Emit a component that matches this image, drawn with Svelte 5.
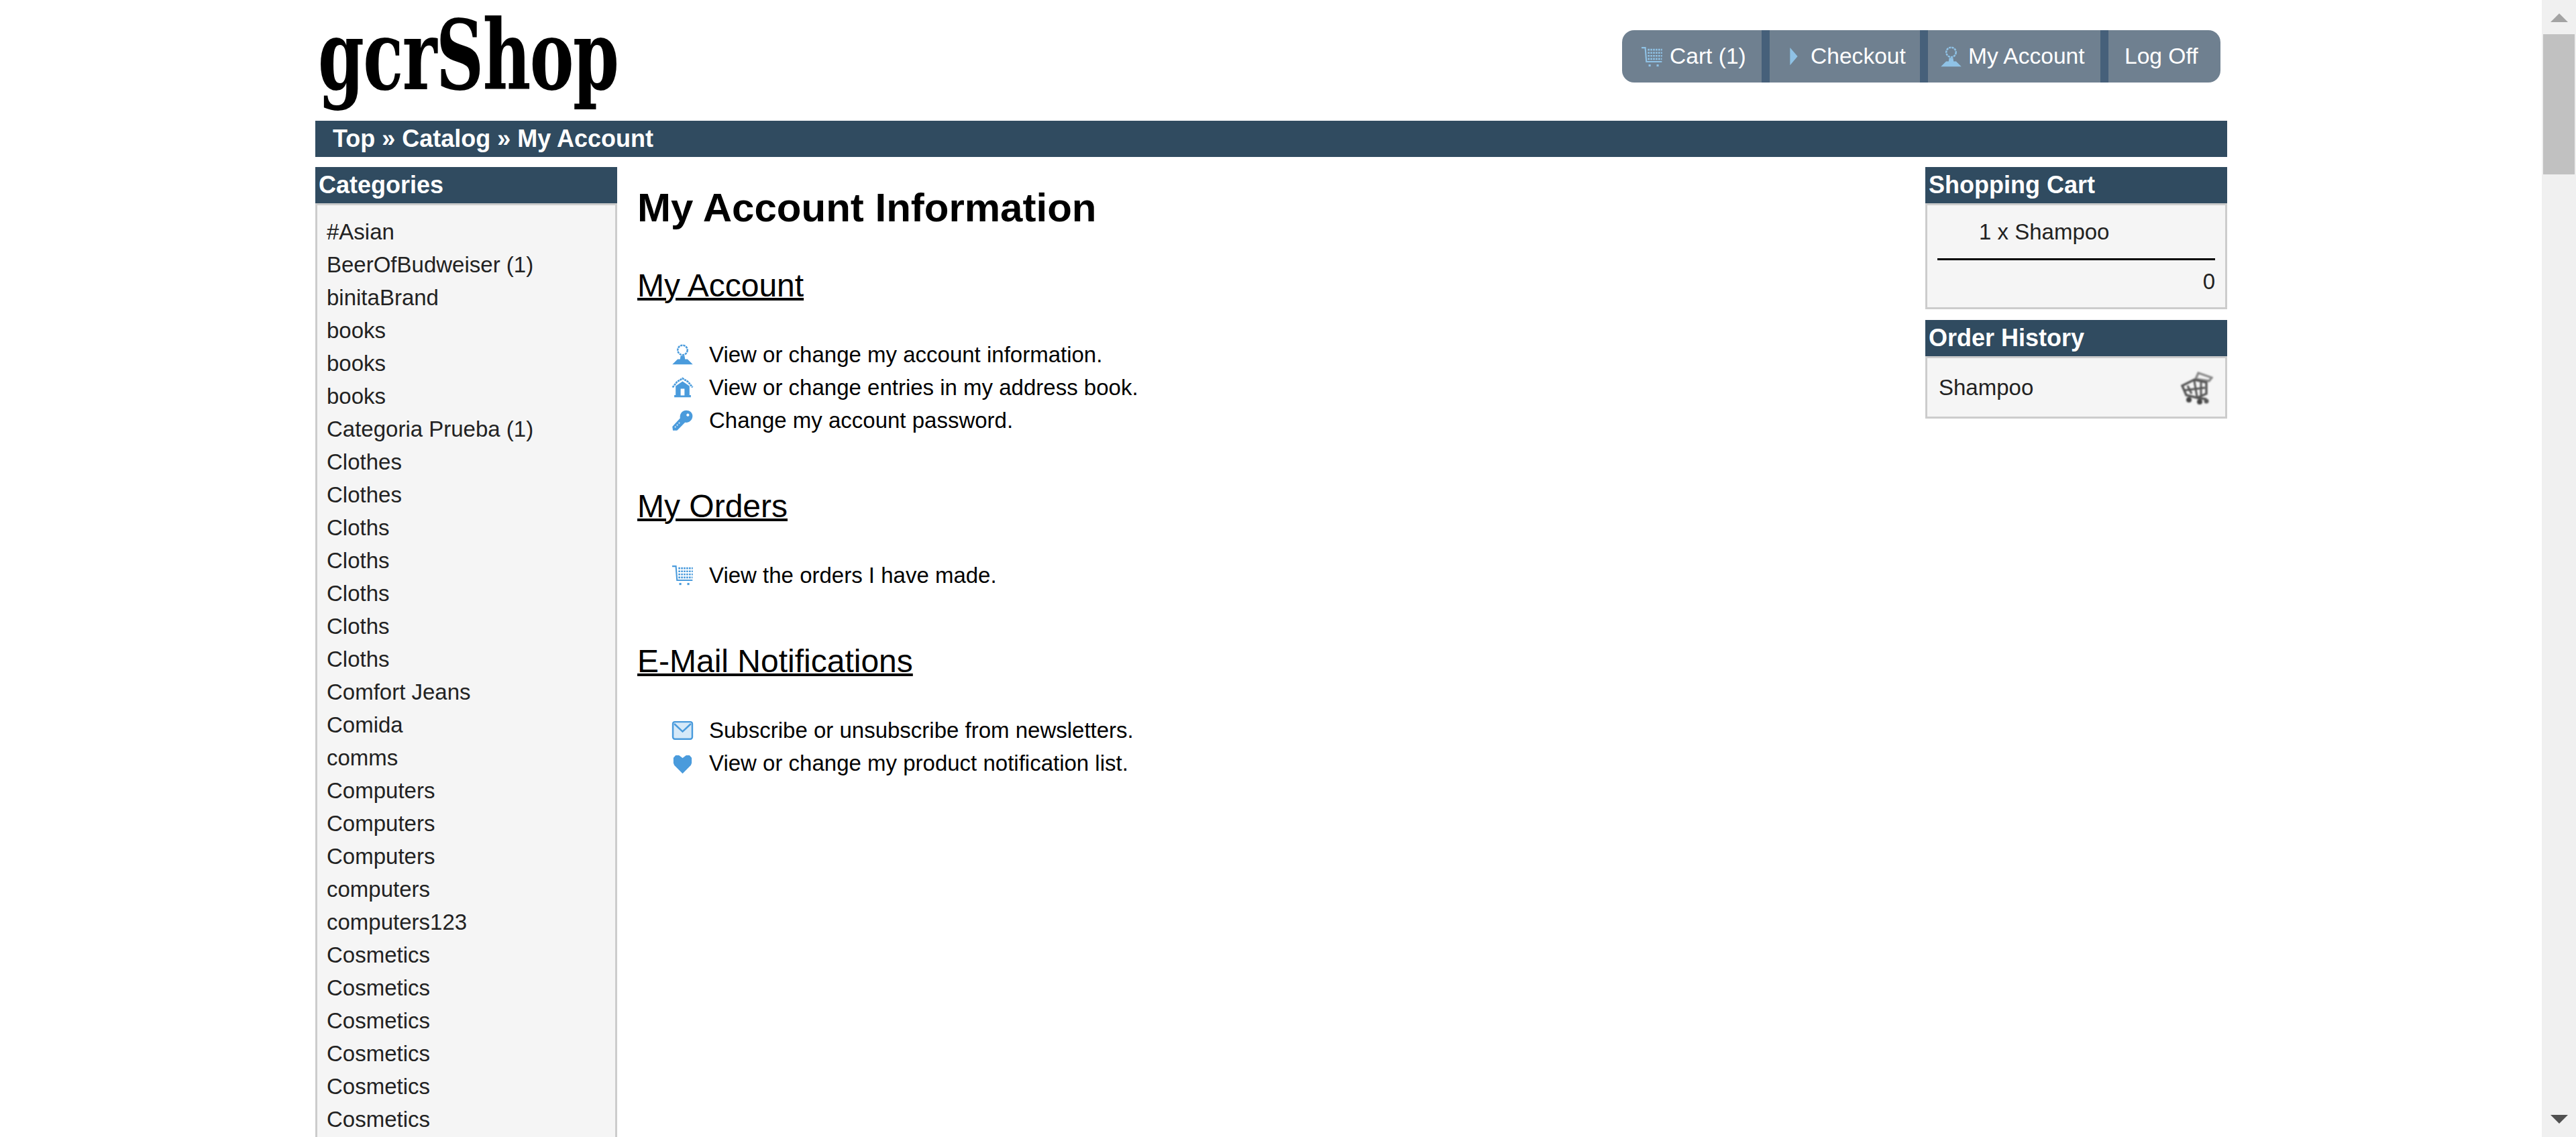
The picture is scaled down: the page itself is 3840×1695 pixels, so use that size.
<script lang="ts">
  const categories = [
    '#Asian', 'BeerOfBudweiser (1)', 'binitaBrand', 'books', 'books', 'books',
    'Categoria Prueba (1)', 'Clothes', 'Clothes', 'Cloths', 'Cloths', 'Cloths',
    'Cloths', 'Cloths', 'Comfort Jeans', 'Comida', 'comms', 'Computers',
    'Computers', 'Computers', 'computers', 'computers123', 'Cosmetics',
    'Cosmetics', 'Cosmetics', 'Cosmetics', 'Cosmetics', 'Cosmetics'
  ];

  const sections = [
    {
      title: 'My Account',
      links: [
        { icon: 'user', text: 'View or change my account information.' },
        { icon: 'home', text: 'View or change entries in my address book.' },
        { icon: 'key', text: 'Change my account password.' }
      ]
    },
    {
      title: 'My Orders',
      links: [{ icon: 'cart', text: 'View the orders I have made.' }]
    },
    {
      title: 'E-Mail Notifications',
      links: [
        { icon: 'mail', text: 'Subscribe or unsubscribe from newsletters.' },
        { icon: 'heart', text: 'View or change my product notification list.' }
      ]
    }
  ];
</script>

{#snippet icon(name)}
  <svg class="icon" viewBox="0 0 16 16" aria-hidden="true">
    {#if name === 'user'}
      <circle cx="8" cy="4.8" r="3.5" fill="none" stroke="currentColor" stroke-width="1.2" stroke-dasharray="1.6 0.5" />
      <path d="M6.6 8.8 L6.2 11.4 H4.4 L0.6 15.2 H15.4 L11.6 11.4 H9.8 L9.4 8.8 Z" fill="currentColor" />
    {:else if name === 'home'}
      <path d="M0.8 8 L4 4 L8 1.5 L12 4 L15.2 8" fill="none" stroke="currentColor" stroke-width="1.3" stroke-dasharray="1.5 0.4" />
      <path fill-rule="evenodd" d="M3 7 L8 3.6 L13 7 V13.6 H14 V15.2 H2 V13.6 H3 Z M6.6 9 V13.8 H9.4 V9 Z" fill="currentColor" />
    {:else if name === 'key'}
      <path fill-rule="evenodd" d="M10.6 0.8 C13.2 0.8 15.4 2.6 15.2 5.2 C15 8 12.6 10 9.8 9.6 L4 15.4 H1 L0.6 12.6 L6.2 6.6 C5.8 3.4 7.8 0.8 10.6 0.8 Z M11.8 3.2 A1 1 0 1 0 11.81 3.2 Z" fill="currentColor" />
      <path d="M2.4 13.2 L6.4 9.2" stroke="#cfe4f6" stroke-width="0.9" stroke-dasharray="1 1" fill="none" />
    {:else if name === 'cart'}
      <path d="M0.5 1.5 H3.2 L4 11.6 H15.2" fill="none" stroke="currentColor" stroke-width="1" />
      <path d="M5 3 H15.4 M5 5.2 H15.4 M5 7.4 H15.4 M5 9.6 H15.2" fill="none" stroke="currentColor" stroke-width="1.3" stroke-dasharray="1.3 0.6" />
      <rect x="5.6" y="13.6" width="1.5" height="1.5" fill="currentColor" />
      <rect x="11.4" y="13.6" width="1.5" height="1.5" fill="currentColor" />
    {:else if name === 'mail'}
      <rect x="1" y="2" width="14" height="12.4" rx="1.4" fill="#d6e9f8" stroke="currentColor" stroke-width="1.2" />
      <path d="M2 3.4 L8 9 L14 3.4" fill="none" stroke="currentColor" stroke-width="1.2" />
    {:else if name === 'heart'}
      <path d="M8 15.6 L2 9.6 L1.4 8 V4.2 L3 2.4 H5.4 L8 4.4 L10.6 2.4 H13 L14.6 4.2 V8 L14 9.6 Z" fill="currentColor" />
    {:else if name === 'play'}
      <path d="M5 1 L11 8 L5 15 Z" fill="currentColor" />
    {/if}
  </svg>
{/snippet}

<div class="shell">
  <div class="page">
    <div class="wrap">
      <header class="top">
        <div class="logo"><span>gcrShop</span></div>
        <nav class="nav">
          <a class="item cart-item">{@render icon('cart')}Cart (1)</a>
          <a class="item check-item">{@render icon('play')}Checkout</a>
          <a class="item account-item">{@render icon('user')}My Account</a>
          <a class="item off-item">Log Off</a>
        </nav>
      </header>

      <div class="crumbs">Top » Catalog » My Account</div>

      <div class="cols">
        <aside class="left">
          <section class="box">
            <h3>Categories</h3>
            <ul class="box-body cats">
              {#each categories as name}
                <li>{name}</li>
              {/each}
            </ul>
          </section>
        </aside>

        <main class="main">
          <h1>My Account Information</h1>
          {#each sections as section}
            <h2>{section.title}</h2>
            <ul class="links">
              {#each section.links as link}
                <li>{@render icon(link.icon)}<span>{link.text}</span></li>
              {/each}
            </ul>
          {/each}
        </main>

        <aside class="right">
          <section class="box">
            <h3>Shopping Cart</h3>
            <div class="box-body cart-body">
              <div class="cart-line">1 x Shampoo</div>
              <hr />
              <div class="cart-total">0</div>
            </div>
          </section>
          <section class="box">
            <h3>Order History</h3>
            <div class="box-body history">
              <span>Shampoo</span>
              <svg class="mini-cart" viewBox="0 0 48 50" aria-hidden="true">
                <g fill="none" stroke="#555" stroke-width="3.4">
                  <path d="M22 12 L26 3 L46 10 L42 15 Z" stroke="#888" />
                  <path d="M2 22 L20 13 L38 17 L38 34 L24 40 L8 36 Z" />
                  <path d="M10 22 L16 34 M20 15 L24 38 M30 17 L30 36 M4 29 L36 25" stroke-width="3" />
                  <path d="M24 40 L38 42" />
                </g>
                <circle cx="12" cy="43" r="4" fill="#444" />
                <circle cx="28" cy="46" r="4" fill="#444" />
                <circle cx="38" cy="45" r="3.5" fill="#555" />
              </svg>
            </div>
          </section>
        </aside>
      </div>
    </div>
  </div>

  <div class="scrollbar">
    <div class="arrow up"></div>
    <div class="thumb"></div>
    <div class="spacer"></div>
    <div class="arrow down"></div>
  </div>
</div>

<style>
  :global(body) {
    margin: 0;
    overflow: hidden;
    background: #fff;
  }

  .shell {
    display: flex;
    height: 100vh;
    overflow: hidden;
    font-family: 'Liberation Sans', Arial, sans-serif;
    color: #000;
  }

  .page {
    flex: 1;
    min-width: 0;
    overflow: hidden;
  }

  .wrap {
    width: 2850px;
    margin: 0 0 0 470px;
  }

  .top {
    display: flex;
    justify-content: space-between;
    height: 180px;
    box-sizing: border-box;
  }

  .logo {
    flex: none;
    height: 180px;
  }

  .logo span {
    display: inline-block;
    margin: 0 0 0 4px;
    font-family: 'DejaVu Serif Condensed', 'DejaVu Serif', serif;
    font-weight: 700;
    font-size: 144px;
    line-height: 180px;
    letter-spacing: -2px;
    transform: translateY(-7px) scaleX(0.76);
    transform-origin: left center;
    white-space: nowrap;
  }

  .nav {
    display: flex;
    align-items: stretch;
    align-self: flex-start;
    height: 78px;
    margin: 45px 10px 0 0;
    background: #6f8090;
    border-radius: 18px;
    overflow: hidden;
  }

  .item {
    display: flex;
    align-items: center;
    box-sizing: border-box;
    color: #fff;
    font-size: 33.6px;
    white-space: nowrap;
    border-right: 12px solid #46607a;
  }

  .item .icon {
    color: #8fc2e6;
  }

  .cart-item {
    width: 220px;
    padding-left: 28px;
    gap: 10px;
  }

  .check-item {
    width: 236px;
    padding-left: 21px;
    gap: 10px;
  }

  .check-item .icon {
    width: 30px;
    height: 32px;
  }

  .account-item {
    width: 269px;
    padding-left: 18px;
    gap: 9px;
  }

  .off-item {
    width: 167px;
    padding-left: 24px;
    border-right: 0;
  }

  .crumbs {
    height: 54px;
    padding-left: 26px;
    background: #304b60;
    color: #fff;
    font-size: 36px;
    font-weight: 700;
    line-height: 54px;
  }

  .cols {
    display: flex;
    align-items: flex-start;
    margin-top: 15px;
  }

  .left {
    width: 450px;
    flex: none;
  }

  .right {
    display: flex;
    flex-direction: column;
    gap: 16px;
    width: 450px;
    flex: none;
  }

  .main {
    flex: 1;
    min-width: 0;
    padding-left: 30px;
  }

  .box h3 {
    height: 54px;
    margin: 0;
    padding-left: 5px;
    background: #304b60;
    color: #fff;
    font-size: 36px;
    font-weight: 700;
    line-height: 54px;
  }

  .box-body {
    margin: 0;
    padding: 0;
    border: 3px solid #ccc;
    background: #f5f5f5;
    color: #222;
    font-size: 33px;
    list-style: none;
  }

  .cats {
    padding: 15px 0 40px 14px;
  }

  .cats li {
    height: 49px;
    line-height: 49px;
    white-space: nowrap;
  }

  .cart-body {
    height: 158px;
    box-sizing: border-box;
    padding: 15px 15px 0;
  }

  .cart-line {
    height: 49px;
    padding-left: 62px;
    line-height: 49px;
  }

  .cart-body hr {
    height: 3px;
    margin: 15px 0 0;
    border: 0;
    background: #000;
  }

  .cart-total {
    height: 49px;
    margin-top: 7px;
    line-height: 49px;
    text-align: right;
  }

  .history {
    display: flex;
    align-items: center;
    justify-content: space-between;
    height: 93px;
    box-sizing: border-box;
    padding: 0 18px 0 17px;
  }

  .mini-cart {
    width: 48px;
    height: 50px;
    filter: blur(1.1px);
  }

  h1 {
    margin: 0;
    padding-top: 26px;
    font-size: 60px;
    font-weight: 700;
    line-height: 70px;
  }

  h2 {
    margin: 53px 0 0;
    font-size: 48px;
    font-weight: 400;
    line-height: 56px;
    text-decoration: underline;
    text-decoration-thickness: 4px;
  }

  .links {
    margin: 0 0 76px;
    padding: 50px 0 0 51px;
    list-style: none;
  }

  .links li {
    display: flex;
    align-items: center;
    gap: 23px;
    height: 49px;
    font-size: 33px;
    line-height: 49px;
    white-space: nowrap;
  }

  .icon {
    flex: none;
    width: 33px;
    height: 33px;
    color: #4a9bdc;
    filter: blur(0.4px);
  }

  .scrollbar {
    display: flex;
    flex-direction: column;
    align-items: center;
    flex: none;
    width: 51px;
    height: 100%;
    background: #f0f0f0;
  }

  .arrow {
    flex: none;
    width: 0;
    height: 0;
    border-left: 13px solid transparent;
    border-right: 13px solid transparent;
  }

  .arrow.up {
    margin-top: 20px;
    border-bottom: 13px solid #a3a3a3;
  }

  .arrow.down {
    margin-bottom: 20px;
    border-top: 13px solid #505050;
  }

  .thumb {
    flex: none;
    width: 47px;
    height: 209px;
    margin-top: 18px;
    background: #c1c1c1;
  }

  .spacer {
    flex: 1;
  }
</style>
